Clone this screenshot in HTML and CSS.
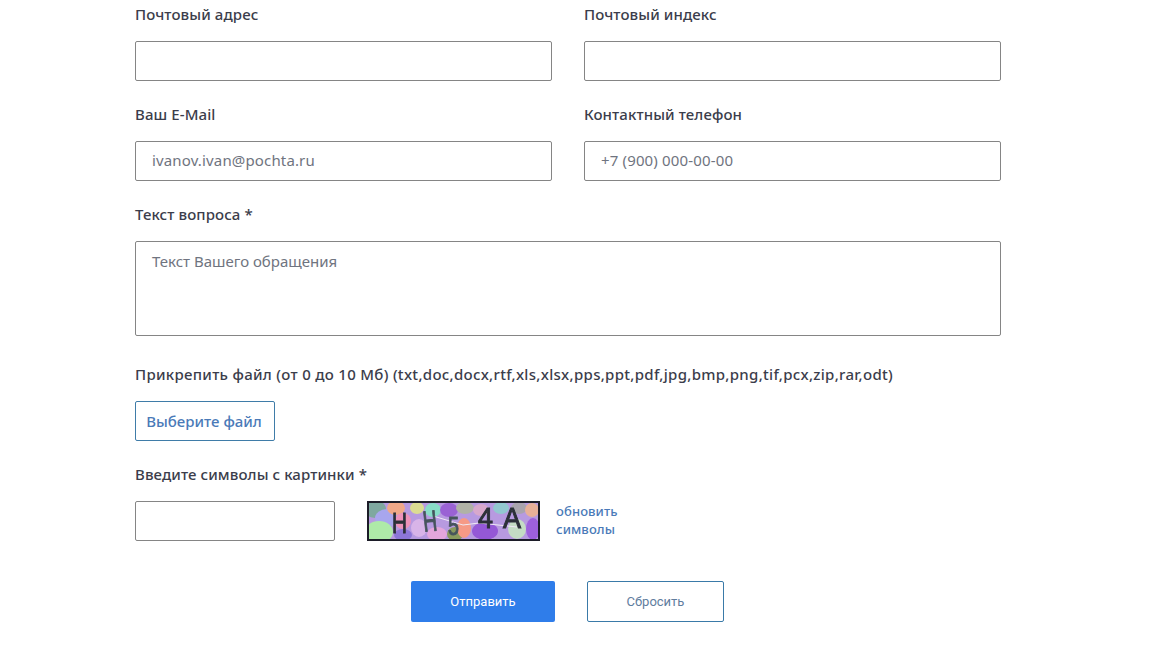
FILE: index.html
```html
<!DOCTYPE html>
<html lang="ru">
<head>
    <meta charset="UTF-8">
    <title>Форма обращения</title>
    <link rel="stylesheet" href="styles.css">
</head>
<body>
    <form class="form">
        <div class="row">
            <div class="field">
                <label class="label">Почтовый адрес</label>
                <input class="input" type="text">
            </div>
            <div class="field">
                <label class="label">Почтовый индекс</label>
                <input class="input" type="text">
            </div>
        </div>
        <div class="row">
            <div class="field">
                <label class="label">Ваш E-Mail</label>
                <input class="input" type="text" placeholder="ivanov.ivan@pochta.ru">
            </div>
            <div class="field">
                <label class="label">Контактный телефон</label>
                <input class="input" type="text" placeholder="+7 (900) 000-00-00">
            </div>
        </div>
        <div class="block block-text">
            <label class="label">Текст вопроса *</label>
            <textarea class="input textarea" placeholder="Текст Вашего обращения"></textarea>
        </div>
        <div class="block">
            <label class="label label-wide">Прикрепить файл (от 0 до 10 Мб) (txt,doc,docx,rtf,xls,xlsx,pps,ppt,pdf,jpg,bmp,png,tif,pcx,zip,rar,odt)</label>
            <button class="file-btn" type="button">Выберите файл</button>
        </div>
        <div class="block block-captcha">
            <label class="label">Введите символы с картинки *</label>
            <div class="captcha-row">
                <input class="input captcha-input" type="text">
                <svg class="captcha" width="173" height="40" viewBox="0 0 173 40">
                    <rect width="173" height="40" fill="#b79ae0"/>
                    <g class="captcha-bg">
                        <ellipse cx="8" cy="8" rx="11" ry="9" fill="#7fa8a0"/>
                        <ellipse cx="20" cy="17" rx="12" ry="9" fill="#a8a6ee"/>
                        <ellipse cx="12" cy="31" rx="14" ry="11" fill="#aeeaa8"/>
                        <ellipse cx="29" cy="7" rx="9" ry="7" fill="#f0a888"/>
                        <ellipse cx="36" cy="20" rx="8" ry="8" fill="#ee92ba"/>
                        <ellipse cx="50" cy="7" rx="7" ry="6" fill="#dcdc92"/>
                        <ellipse cx="66" cy="9" rx="8" ry="7" fill="#88dcc8"/>
                        <ellipse cx="36" cy="34" rx="9" ry="6" fill="#8d76d8"/>
                        <ellipse cx="52" cy="27" rx="8" ry="9" fill="#d8b4e8"/>
                        <ellipse cx="82" cy="9" rx="9" ry="7" fill="#9a62d4"/>
                        <ellipse cx="70" cy="33" rx="10" ry="7" fill="#e4a6dc"/>
                        <ellipse cx="88" cy="33" rx="8" ry="7" fill="#8a9a5e"/>
                        <ellipse cx="98" cy="7" rx="9" ry="6" fill="#b0b2a6"/>
                        <ellipse cx="97" cy="27" rx="7" ry="10" fill="#f59a86"/>
                        <ellipse cx="114" cy="9" rx="8" ry="6" fill="#d8a8cc"/>
                        <ellipse cx="118" cy="30" rx="13" ry="9" fill="#9458d6"/>
                        <ellipse cx="134" cy="7" rx="8" ry="6" fill="#92c8d0"/>
                        <ellipse cx="150" cy="28" rx="9" ry="10" fill="#c4dcc4"/>
                        <ellipse cx="152" cy="7" rx="8" ry="6" fill="#a9a4ae"/>
                        <ellipse cx="165" cy="9" rx="7" ry="7" fill="#e8b098"/>
                        <ellipse cx="166" cy="28" rx="7" ry="11" fill="#9d60dc"/>
                        <path d="M66 15 L96 24 L112 22 L150 26" fill="none" stroke="#efe9f4" stroke-width="1"/>
                    </g>
                    <g class="captcha-text">
                        <text x="25" y="32" textLength="15" lengthAdjust="spacingAndGlyphs">H</text>
                        <text class="pale" x="56" y="30" textLength="14" lengthAdjust="spacingAndGlyphs" transform="rotate(-6 63 20)">H</text>
                        <text class="pale small" x="81" y="34" textLength="11" lengthAdjust="spacingAndGlyphs">5</text>
                        <text x="111" y="27" textLength="15" lengthAdjust="spacingAndGlyphs">4</text>
                        <text x="136" y="27" textLength="18" lengthAdjust="spacingAndGlyphs">A</text>
                    </g>
                    <rect x="1" y="1" width="171" height="38" fill="none" stroke="#1c1c28" stroke-width="2"/>
                </svg>
                <a class="refresh" href="#">обновить<br>символы</a>
            </div>
        </div>
        <div class="actions">
            <button class="btn btn-submit" type="button">Отправить</button>
            <button class="btn btn-reset" type="button">Сбросить</button>
        </div>
    </form>
</body>
</html>
```

FILE: styles.css
```css
body {
    margin: 0;
    background: #fff;
    font-family: "Noto Sans", Arial, sans-serif;
    color: #3b3d4b;
}
.form {
    width: 866px;
    margin-left: 135px;
    padding: 4px 0 31px;
}
.row {
    display: flex;
    gap: 32px;
}
.field {
    width: 417px;
    margin-bottom: 23px;
}
.block {
    margin-bottom: 23px;
}
.block-text {
    margin-bottom: 28px;
}
.block-captcha {
    margin-bottom: 40px;
}
.label {
    display: block;
    height: 22px;
    margin-bottom: 15px;
    font-size: 15px;
    font-weight: 500;
    line-height: 20px;
    letter-spacing: 0.1px;
    white-space: nowrap;
}
.label-wide {
    letter-spacing: 0.3px;
}
.input {
    display: block;
    box-sizing: border-box;
    width: 100%;
    height: 40px;
    padding: 0 16px 2px;
    border: 1px solid #858585;
    border-radius: 2px;
    background: #fff;
    font-family: "Noto Sans", Arial, sans-serif;
    font-size: 15px;
    letter-spacing: 0.15px;
    color: #3b3d4b;
}
.input::placeholder {
    color: #6f7480;
    opacity: 1;
}
.textarea {
    height: 95px;
    padding-top: 9px;
    line-height: 20px;
    letter-spacing: 0;
    resize: none;
}
.file-btn {
    display: block;
    box-sizing: border-box;
    width: 140px;
    height: 40px;
    padding: 0 2px 0 0;
    border: 1px solid #3f7ca8;
    border-radius: 2px;
    background: #fff;
    font-family: "Noto Sans", Arial, sans-serif;
    font-size: 15px;
    font-weight: 500;
    color: #4a7ab8;
}
.captcha-row {
    display: flex;
    align-items: center;
    height: 40px;
}
.captcha-input {
    width: 200px;
    margin-right: 32px;
}
.captcha {
    display: block;
    margin-right: 16px;
}
.captcha-bg {
    filter: blur(0.5px);
}
.captcha-text {
    filter: blur(0.4px);
}
.captcha-text text {
    font-family: "Liberation Sans", sans-serif;
    font-size: 29px;
    fill: #2c3038;
    stroke: #2c3038;
    stroke-width: 1px;
}
.captcha-text .pale {
    fill: #46545c;
    stroke: #46545c;
}
.captcha-text .small {
    font-size: 26px;
}
.refresh {
    padding-bottom: 2px;
    font-size: 13px;
    font-weight: 500;
    line-height: 18px;
    letter-spacing: 0.1px;
    color: #4a7ab8;
    text-decoration: none;
}
.actions {
    display: flex;
    justify-content: center;
    gap: 32px;
    padding-right: 1px;
}
.btn {
    box-sizing: border-box;
    height: 41px;
    padding: 0;
    border-radius: 2px;
    font-family: Roboto, Arial, sans-serif;
    font-size: 13px;
}
.btn-submit {
    width: 144px;
    border: none;
    background: #2f7dea;
    color: #fff;
}
.btn-reset {
    width: 137px;
    border: 1px solid #3a7aa8;
    background: #fff;
    color: #5f7d9e;
}
```
